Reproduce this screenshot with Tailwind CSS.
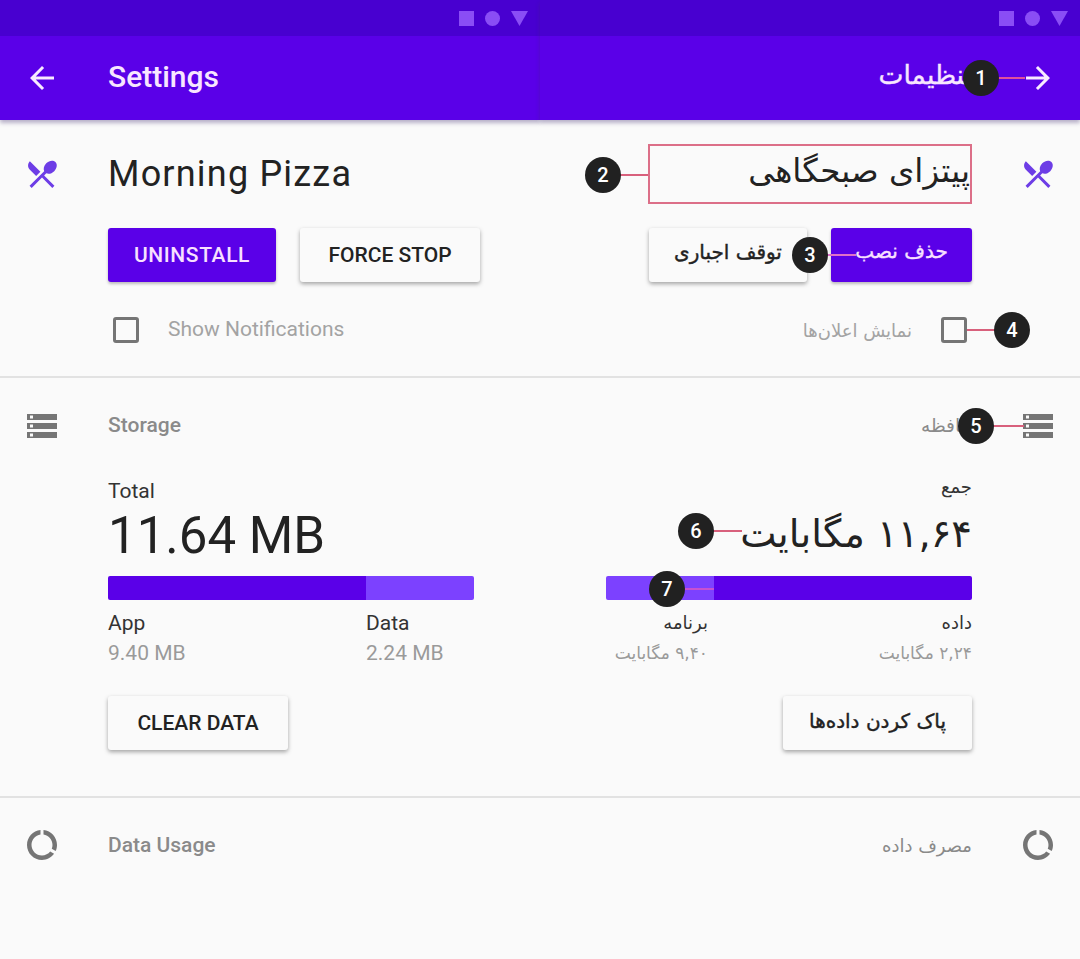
<!DOCTYPE html>
<html lang="en">
<head>
  <meta charset="UTF-8">
  <title>Morning Pizza settings</title>
  <script src="https://cdn.jsdelivr.net/npm/@tailwindcss/browser@4"></script>
</head>
<body class="bg-[#fafafa] font-['Roboto','DejaVu_Sans',sans-serif]">
  <div class="relative flex w-[1080px] h-[959px] overflow-hidden bg-[#fafafa]">

    <!-- English screen -->
    <div class="w-[540px] flex flex-col" dir="ltr">
      <div class="relative z-10 shadow-[0_3px_4px_rgba(60,40,110,0.35)]">
        <div class="h-9 bg-[#4800d0] flex items-center justify-end gap-[11px] pr-[12px]">
          <div class="w-[15px] h-[15px] bg-[#8a4df5]"></div>
          <div class="w-[15px] h-[15px] rounded-full bg-[#8a4df5]"></div>
          <svg class="w-[17px] h-[15px]" viewBox="0 0 17 15"><path d="M0 0h17L8.5 15z" fill="#8a4df5"/></svg>
        </div>
        <div class="h-[84px] bg-[#5a00e8] flex items-center">
          <div class="w-[84px] flex justify-center">
            <svg class="w-9 h-9" viewBox="0 0 24 24" fill="#f8eaff"><path d="M20 11H7.83l5.59-5.59L12 4l-8 8 8 8 1.41-1.41L7.83 13H20v-2z"/></svg>
          </div>
          <div class="ml-6 pb-1 text-[30px] font-medium text-[#f8e6ff]">Settings</div>
        </div>
      </div>

      <div class="flex items-center h-[60px] mt-6">
        <div class="w-[84px] flex justify-center">
          <svg class="w-9 h-9" viewBox="0 0 24 24" fill="#6d3de6"><path d="M8.1 13.34l2.83-2.83L3.91 3.5c-1.56 1.56-1.56 4.09 0 5.66l4.19 4.18zm6.78-1.81c1.53.71 3.68.21 5.27-1.38 1.91-1.91 2.28-4.65.81-6.12-1.46-1.46-4.2-1.1-6.12.81-1.59 1.59-2.09 3.74-1.38 5.27L3.7 19.87l1.41 1.41L12 14.41l6.88 6.88 1.41-1.41L13.41 13l1.47-1.47z"/></svg>
        </div>
        <div class="ml-6 text-[36px] tracking-[1.2px] text-[#222]">Morning Pizza</div>
      </div>
      <div class="flex gap-6 ml-[108px] mt-6">
        <button class="w-[168px] h-[54px] pt-0.5 rounded-[3px] bg-[#5a00e8] text-[#f8e0ff] text-[21px] font-medium tracking-[0.6px] shadow-[0_2px_3px_rgba(0,0,0,0.25)]">UNINSTALL</button>
        <button class="w-[180px] h-[54px] pt-0.5 rounded-[3px] bg-[#fafafa] text-[#222] text-[21px] font-medium shadow-[0_2px_4px_rgba(0,0,0,0.35)]">FORCE STOP</button>
      </div>
      <div class="flex items-center h-[26px] ml-[113px] mt-[35px]">
        <div class="w-[26px] h-[26px] rounded-[3px] border-[3px] border-[#757575]"></div>
        <div class="ml-[29px] text-[21px] text-[#a3a3a3]">Show Notifications</div>
      </div>
      <div class="h-0.5 bg-[#e2e2e2] mt-[33px]"></div>

      <div class="flex items-center h-9 mt-[30px]">
        <div class="w-[84px] flex justify-center">
          <svg class="w-9 h-9" viewBox="0 0 24 24" fill="#757575"><path d="M2 20h20v-4H2v4zm2-3h2v2H4v-2zM2 4v4h20V4H2zm4 3H4V5h2v2zm-4 7h20v-4H2v4zm2-3h2v2H4v-2z"/></svg>
        </div>
        <div class="ml-6 text-[21px] font-medium text-[#8a8a8a]">Storage</div>
      </div>
      <div class="ml-[108px] w-[366px] mt-[35px]">
        <div class="text-[21px] leading-6 text-[#333]">Total</div>
        <div class="text-[51px] leading-[60px] mt-[3px] text-[#222]">11.64 MB</div>
        <div class="flex h-6 mt-[10px] rounded-[2px] overflow-hidden">
          <div class="w-[258px] bg-[#5a00e8]"></div>
          <div class="flex-1 bg-[#7c41ff]"></div>
        </div>
        <div class="flex mt-[11px]">
          <div class="w-[258px]">
            <div class="text-[21px] leading-6 text-[#333]">App</div>
            <div class="text-[21px] leading-6 mt-[6px] text-[#9a9a9a]">9.40 MB</div>
          </div>
          <div>
            <div class="text-[21px] leading-6 text-[#333]">Data</div>
            <div class="text-[21px] leading-6 mt-[6px] text-[#9a9a9a]">2.24 MB</div>
          </div>
        </div>
        <button class="w-[180px] h-[54px] pt-0.5 mt-[31px] rounded-[3px] bg-[#fafafa] text-[#222] text-[21px] font-medium shadow-[0_2px_4px_rgba(0,0,0,0.35)]">CLEAR DATA</button>
      </div>
      <div class="h-0.5 bg-[#e2e2e2] mt-[46px]"></div>
      <div class="flex items-center h-9 mt-[29px]">
        <div class="w-[84px] flex justify-center">
          <svg class="w-9 h-9" viewBox="0 0 24 24" fill="#757575"><path d="M13 2.05v3.03c3.39.49 6 3.39 6 6.92 0 .9-.18 1.75-.48 2.54l2.6 1.53c.56-1.24.88-2.62.88-4.07 0-5.18-3.95-9.45-9-9.95zM12 19c-3.87 0-7-3.13-7-7 0-3.53 2.61-6.43 6-6.92V2.05c-5.06.5-9 4.76-9 9.95 0 5.52 4.47 10 9.99 10 3.31 0 6.24-1.61 8.06-4.09l-2.6-1.53C16.17 17.98 14.21 19 12 19z"/></svg>
        </div>
        <div class="ml-6 pt-0.5 text-[21px] font-medium text-[#8a8a8a]">Data Usage</div>
      </div>
    </div>

    <!-- Persian screen -->
    <div class="w-[540px] flex flex-col font-['DejaVu_Sans',sans-serif]" dir="rtl">
      <div class="relative z-10 shadow-[0_3px_4px_rgba(60,40,110,0.35)]">
        <div class="h-9 bg-[#4800d0] flex items-center justify-end gap-[11px] pr-[12px]" dir="ltr">
          <div class="w-[15px] h-[15px] bg-[#8a4df5]"></div>
          <div class="w-[15px] h-[15px] rounded-full bg-[#8a4df5]"></div>
          <svg class="w-[17px] h-[15px]" viewBox="0 0 17 15"><path d="M0 0h17L8.5 15z" fill="#8a4df5"/></svg>
        </div>
        <div class="h-[84px] bg-[#5a00e8] flex items-center">
          <div class="w-[84px] flex justify-center">
            <svg class="w-9 h-9" viewBox="0 0 24 24" fill="#f8eaff"><path d="M4 11h12.17l-5.59-5.59L12 4l8 8-8 8-1.41-1.41L16.17 13H4v-2z"/></svg>
          </div>
          <div class="mr-6 pb-[6px] text-[26.5px] [-webkit-text-stroke:0.4px_currentColor] text-[#f8e6ff]">تنظیمات</div>
        </div>
      </div>

      <div class="flex items-center h-[60px] mt-6">
        <div class="w-[84px] flex justify-center">
          <svg class="w-9 h-9" viewBox="0 0 24 24" fill="#6d3de6"><path d="M8.1 13.34l2.83-2.83L3.91 3.5c-1.56 1.56-1.56 4.09 0 5.66l4.19 4.18zm6.78-1.81c1.53.71 3.68.21 5.27-1.38 1.91-1.91 2.28-4.65.81-6.12-1.46-1.46-4.2-1.1-6.12.81-1.59 1.59-2.09 3.74-1.38 5.27L3.7 19.87l1.41 1.41L12 14.41l6.88 6.88 1.41-1.41L13.41 13l1.47-1.47z"/></svg>
        </div>
        <div class="mr-6 w-[324px] h-[60px] pb-[6px] border-2 border-[#dc6f88] flex items-center text-[32.5px] text-[#222]">پیتزای صبحگاهی</div>
      </div>
      <div class="flex gap-6 mr-[108px] mt-6">
        <button class="w-[141px] h-[54px] pb-[8px] rounded-[3px] bg-[#5a00e8] text-[#f8e0ff] text-[20px] [-webkit-text-stroke:0.4px_currentColor] shadow-[0_2px_3px_rgba(0,0,0,0.25)]">حذف نصب</button>
        <button class="w-[158px] h-[54px] pb-[6px] rounded-[3px] bg-[#fafafa] text-[#222] text-[20px] [-webkit-text-stroke:0.4px_currentColor] shadow-[0_2px_4px_rgba(0,0,0,0.35)]">توقف اجباری</button>
      </div>
      <div class="flex items-center h-[26px] mr-[113px] mt-[35px]">
        <div class="w-[26px] h-[26px] rounded-[3px] border-[3px] border-[#757575]"></div>
        <div class="mr-[29px] text-[18px] text-[#a3a3a3]">نمایش اعلان‌ها</div>
      </div>
      <div class="h-0.5 bg-[#e2e2e2] mt-[33px]"></div>

      <div class="flex items-center h-9 mt-[30px]">
        <div class="w-[84px] flex justify-center">
          <svg class="w-9 h-9" viewBox="0 0 24 24" fill="#757575"><path d="M2 20h20v-4H2v4zm2-3h2v2H4v-2zM2 4v4h20V4H2zm4 3H4V5h2v2zm-4 7h20v-4H2v4zm2-3h2v2H4v-2z"/></svg>
        </div>
        <div class="mr-6 text-[18.5px] text-[#8a8a8a]">حافظه</div>
      </div>
      <div class="mr-[108px] w-[366px] mt-[31px]">
        <div class="text-[18px] leading-6 text-[#333]">جمع</div>
        <div class="text-[38.5px] leading-[60px] mt-[5px] text-[#222]">۱۱,۶۴ مگابایت</div>
        <div class="flex h-6 mt-[12px] rounded-[2px] overflow-hidden">
          <div class="w-[258px] bg-[#5a00e8]"></div>
          <div class="flex-1 bg-[#7c41ff]"></div>
        </div>
        <div class="flex mt-[11px]">
          <div class="w-[264px]">
            <div class="text-[18px] leading-6 text-[#333]">داده</div>
            <div class="text-[17px] leading-6 mt-[6px] text-[#9a9a9a]">۲,۲۴ مگابایت</div>
          </div>
          <div>
            <div class="text-[18px] leading-6 text-[#333]">برنامه</div>
            <div class="text-[17px] leading-6 mt-[6px] text-[#9a9a9a]">۹,۴۰ مگابایت</div>
          </div>
        </div>
        <button class="w-[189px] h-[54px] pb-[4px] mt-[31px] rounded-[3px] bg-[#fafafa] text-[#222] text-[20px] [-webkit-text-stroke:0.4px_currentColor] shadow-[0_2px_4px_rgba(0,0,0,0.35)]">پاک کردن داده‌ها</button>
      </div>
      <div class="h-0.5 bg-[#e2e2e2] mt-[46px]"></div>
      <div class="flex items-center h-9 mt-[29px]">
        <div class="w-[84px] flex justify-center">
          <svg class="w-9 h-9" viewBox="0 0 24 24" fill="#757575"><path d="M13 2.05v3.03c3.39.49 6 3.39 6 6.92 0 .9-.18 1.75-.48 2.54l2.6 1.53c.56-1.24.88-2.62.88-4.07 0-5.18-3.95-9.45-9-9.95zM12 19c-3.87 0-7-3.13-7-7 0-3.53 2.61-6.43 6-6.92V2.05c-5.06.5-9 4.76-9 9.95 0 5.52 4.47 10 9.99 10 3.31 0 6.24-1.61 8.06-4.09l-2.6-1.53C16.17 17.98 14.21 19 12 19z"/></svg>
        </div>
        <div class="mr-6 text-[18px] text-[#8a8a8a]">مصرف داده</div>
      </div>
    </div>

    <!-- Numbered callouts over the Persian screen -->
    <div class="absolute z-20 left-[981px] top-[77px] w-[44px] h-0.5 bg-[#e0509a]"></div>
    <div class="absolute z-20 left-[603px] top-[174px] w-[45px] h-0.5 bg-[#d8607c]"></div>
    <div class="absolute z-20 left-[810px] top-[254px] w-[46px] h-0.5 bg-[#e070c8]"></div>
    <div class="absolute z-20 left-[967px] top-[329px] w-[45px] h-0.5 bg-[#d8607c]"></div>
    <div class="absolute z-20 left-[976px] top-[425px] w-[48px] h-0.5 bg-[#d8607c]"></div>
    <div class="absolute z-20 left-[696px] top-[530px] w-[46px] h-0.5 bg-[#d8607c]"></div>
    <div class="absolute z-20 left-[667px] top-[588px] w-[47px] h-0.5 bg-[#c850d0]"></div>

    <div class="absolute z-30 left-[963px] top-[60px] w-9 h-9 rounded-full bg-[#212121] text-white text-[20px] font-medium flex items-center justify-center">1</div>
    <div class="absolute z-30 left-[585px] top-[157px] w-9 h-9 rounded-full bg-[#212121] text-white text-[20px] font-medium flex items-center justify-center">2</div>
    <div class="absolute z-30 left-[792px] top-[237px] w-9 h-9 rounded-full bg-[#212121] text-white text-[20px] font-medium flex items-center justify-center">3</div>
    <div class="absolute z-30 left-[994px] top-[312px] w-9 h-9 rounded-full bg-[#212121] text-white text-[20px] font-medium flex items-center justify-center">4</div>
    <div class="absolute z-30 left-[958px] top-[408px] w-9 h-9 rounded-full bg-[#212121] text-white text-[20px] font-medium flex items-center justify-center">5</div>
    <div class="absolute z-30 left-[678px] top-[513px] w-9 h-9 rounded-full bg-[#212121] text-white text-[20px] font-medium flex items-center justify-center">6</div>
    <div class="absolute z-30 left-[649px] top-[571px] w-9 h-9 rounded-full bg-[#212121] text-white text-[20px] font-medium flex items-center justify-center">7</div>
  </div>
</body>
</html>
